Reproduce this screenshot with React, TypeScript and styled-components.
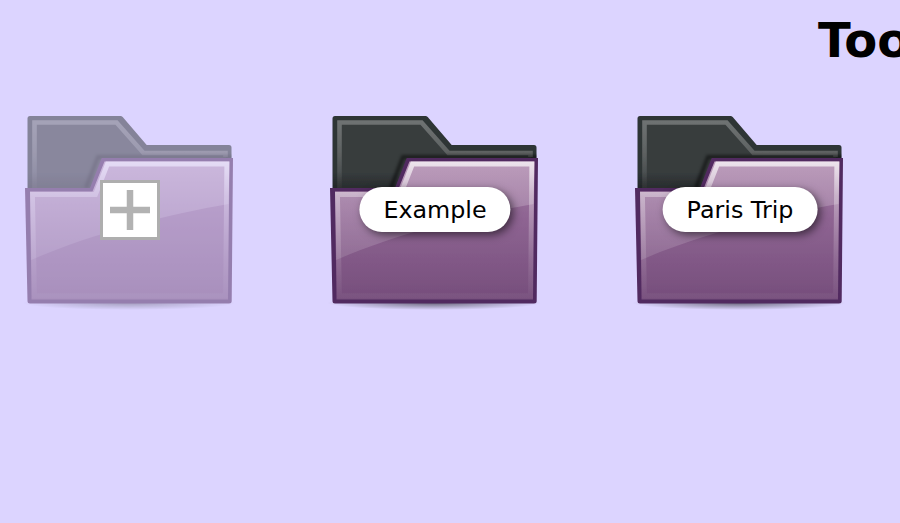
import React from "react";
import styled, { createGlobalStyle } from "styled-components";

const Global = createGlobalStyle`
  html, body { margin: 0; padding: 0; background: #dcd4ff; overflow: hidden; }
  body { font-family: "DejaVu Sans", sans-serif; }
`;

const Page = styled.div`
  width: 900px;
  height: 523px;
  overflow: hidden;
  background: #dcd4ff;
`;

const Title = styled.h1`
  margin: 0 0 0 818px;
  width: 200px;
  height: 110px;
  padding-top: 12px;
  box-sizing: border-box;
  font-size: 48px;
  line-height: 57px;
  font-weight: 700;
  color: #000;
  white-space: nowrap;
`;

const Shelf = styled.div`
  display: flex;
  gap: 85px;
  padding-left: 20px;
`;

const Item = styled.div`
  position: relative;
  width: 220px;
  height: 200px;
`;

const FolderSvg = styled.svg<{ $dim?: boolean }>`
  display: block;
  opacity: ${(p) => (p.$dim ? 0.5 : 1)};
`;

const Pill = styled.div`
  position: absolute;
  left: 50%;
  top: 77px;
  transform: translateX(-50%);
  height: 45px;
  padding: 0 24px;
  border-radius: 23px;
  background: #fff;
  color: #000;
  font-size: 23.8px;
  line-height: 47px;
  white-space: nowrap;
  box-shadow: 3px 3px 8px rgba(0, 0, 0, 0.55);
`;

const AddButton = styled.div`
  position: absolute;
  left: 80px;
  top: 70px;
  width: 60px;
  height: 60px;
  box-sizing: border-box;
  border: 3px solid #aeaeae;
  background: #fff;
  display: flex;
  align-items: center;
  justify-content: center;
`;

const BACK = "M7.5 8.5 Q7.5 6 10 6 H100.5 Q101.7 6 102.7 7 L126.7 35 H209 Q211.5 35 211.5 37.5 V100 H7.5 Z";

const Folder = ({ id, dim }: { id: string; dim?: boolean }) => (
  <FolderSvg $dim={dim} width="220" height="200" viewBox="0 0 220 200" aria-hidden="true">
    <defs>
      <linearGradient id={`${id}-front`} x1="0" y1="48" x2="0" y2="192" gradientUnits="userSpaceOnUse">
        <stop offset="0" stopColor="#a67ca5" />
        <stop offset="0.4" stopColor="#8f6593" />
        <stop offset="1" stopColor="#754d7b" />
      </linearGradient>
      <linearGradient id={`${id}-edge`} x1="0" y1="52" x2="0" y2="188" gradientUnits="userSpaceOnUse">
        <stop offset="0" stopColor="#fff" stopOpacity="0.72" />
        <stop offset="0.25" stopColor="#fff" stopOpacity="0.34" />
        <stop offset="0.7" stopColor="#fff" stopOpacity="0.12" />
        <stop offset="1" stopColor="#fff" stopOpacity="0.03" />
      </linearGradient>
      <linearGradient id={`${id}-gloss`} x1="0" y1="48" x2="0" y2="150" gradientUnits="userSpaceOnUse">
        <stop offset="0" stopColor="#fff" stopOpacity="0.26" />
        <stop offset="1" stopColor="#fff" stopOpacity="0.12" />
      </linearGradient>
      <linearGradient id={`${id}-rim`} x1="0" y1="10" x2="0" y2="82" gradientUnits="userSpaceOnUse">
        <stop offset="0" stopColor="#6f7373" />
        <stop offset="0.45" stopColor="#5e6262" />
        <stop offset="1" stopColor="#3a3f41" />
      </linearGradient>
      <linearGradient id={`${id}-pit`} x1="0" y1="62" x2="0" y2="80" gradientUnits="userSpaceOnUse">
        <stop offset="0" stopColor="#000" stopOpacity="0" />
        <stop offset="1" stopColor="#000" stopOpacity="0.3" />
      </linearGradient>
      <radialGradient id={`${id}-ground`} cx="0.5" cy="0.5" r="0.5">
        <stop offset="0" stopColor="#000" stopOpacity="0.5" />
        <stop offset="1" stopColor="#000" stopOpacity="0" />
      </radialGradient>
      <clipPath id={`${id}-backclip`}>
        <path d={BACK} />
      </clipPath>
      <filter id={`${id}-soft`} x="-5%" y="-5%" width="110%" height="110%">
        <feGaussianBlur stdDeviation="0.6" />
      </filter>
      <filter id={`${id}-blur`} x="-10%" y="-30%" width="120%" height="160%">
        <feGaussianBlur stdDeviation="1.6" />
      </filter>
    </defs>
    <ellipse cx="109" cy="193" rx="107" ry="7" fill={`url(#${id}-ground)`} />
    <g filter={`url(#${id}-soft)`}>
      <path d={BACK} fill="#2e3436" />
      <path d="M14 14 H96 L123 45 H206 V90 H14 Z" fill="#373c3e" />
      <path
        d="M14.5 84 V12.5 H96.5 L123.5 43 H205.5 V47"
        fill="none"
        stroke={`url(#${id}-rim)`}
        strokeWidth="4.6"
      />
      <rect x="8" y="62" width="80" height="20" fill={`url(#${id}-pit)`} />
    </g>
    <g clipPath={`url(#${id}-backclip)`}>
      <path
        d="M66 78 L78 47 H214"
        fill="none"
        stroke="#000"
        strokeWidth="4"
        opacity="0.5"
        filter={`url(#${id}-blur)`}
      />
    </g>
    <g filter={`url(#${id}-soft)`}>
      <path
        d="M5 78 H70 L81.7 48 H213 L211.7 191 Q211.7 193.5 209 193.5 H10 Q7.5 193.5 7.5 191 Z"
        fill="#512a60"
      />
      <path d="M10 81.5 H72.5 L84.5 51.5 H209.5 L208 189.5 H11.5 Z" fill={`url(#${id}-front)`} />
      <path d="M10 81.5 H72.5 L84.5 51.5 H209.5 L208.5 94 C150 104 70 124 11 150 Z" fill={`url(#${id}-gloss)`} />
      <path
        d="M14.5 186 L12.5 84.5 H75.5 L87.5 54 H206.8 L205.5 186 Z"
        fill="none"
        stroke={`url(#${id}-edge)`}
        strokeWidth="4.8"
        strokeLinejoin="miter"
      />
    </g>
  </FolderSvg>
);

const PlusIcon = () => (
  <svg width="40" height="40" viewBox="0 0 40 40" aria-hidden="true">
    <path d="M0 20 H40 M20 0 V40" stroke="#b2b2b2" strokeWidth="6.5" fill="none" />
  </svg>
);

export default function App() {
  return (
    <Page>
      <Global />
      <Title>Tools</Title>
      <Shelf>
        <Item>
          <Folder id="add" dim />
          <AddButton>
            <PlusIcon />
          </AddButton>
        </Item>
        <Item>
          <Folder id="example" />
          <Pill>Example</Pill>
        </Item>
        <Item>
          <Folder id="paris" />
          <Pill>Paris Trip</Pill>
        </Item>
      </Shelf>
    </Page>
  );
}
